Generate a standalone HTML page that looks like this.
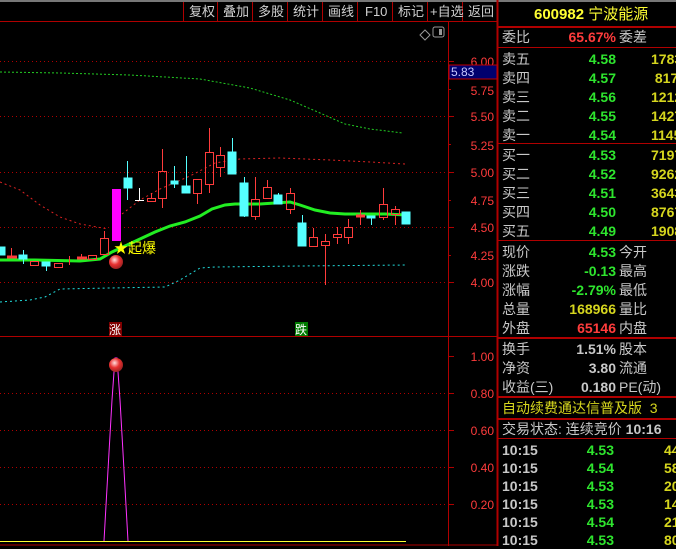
<!DOCTYPE html>
<html><head><meta charset="utf-8"><style>
*{margin:0;padding:0;box-sizing:border-box}
body{width:676px;height:546px;background:#000;overflow:hidden;position:relative;font-family:"Liberation Sans","Noto Sans CJK SC",sans-serif}
.t{position:absolute;white-space:nowrap;font-size:14px;line-height:16px}
.g{color:#c8c8c8}.gr{color:#2ee52e}.y{color:#d6d61e}.r{color:#ff3c3c}.yy{color:#ffff33}
.rt{text-align:right}
.hl{position:absolute;left:498px;width:178px;height:2px;background:#b00000}
</style></head><body>
<svg width="676" height="546" style="position:absolute;left:0;top:0" font-family="Liberation Sans, Noto Sans CJK SC, sans-serif">
<rect x="0" y="0" width="676" height="2" fill="#777"/>
<line x1="0" y1="21.5" x2="498" y2="21.5" stroke="#b00000"/>
<g stroke="#b00000">
<line x1="183.5" y1="2" x2="183.5" y2="21"/><line x1="217.5" y1="2" x2="217.5" y2="21"/><line x1="252.5" y1="2" x2="252.5" y2="21"/><line x1="287.5" y1="2" x2="287.5" y2="21"/><line x1="322.5" y1="2" x2="322.5" y2="21"/><line x1="357.5" y1="2" x2="357.5" y2="21"/><line x1="392.5" y1="2" x2="392.5" y2="21"/><line x1="427.5" y1="2" x2="427.5" y2="21"/><line x1="462.5" y1="2" x2="462.5" y2="21"/>
</g>
<g fill="#d0d0d0" font-size="13">
<text x="189" y="16">复权</text><text x="223" y="16">叠加</text><text x="258" y="16">多股</text><text x="293" y="16">统计</text><text x="328" y="16">画线</text><text x="365" y="16">F10</text><text x="398" y="16">标记</text><text x="430" y="16">+自选</text><text x="468" y="16">返回</text>
</g>
<!-- axes -->
<line x1="448.5" y1="22" x2="448.5" y2="546" stroke="#b00000" stroke-width="1"/>
<line x1="497.5" y1="0" x2="497.5" y2="546" stroke="#b00000" stroke-width="2"/>
<line x1="0" y1="336.5" x2="497" y2="336.5" stroke="#b00000"/>
<line x1="0" y1="545" x2="497" y2="545" stroke="#b00000"/>
<path d="M420 35 l5 -5 l5 5 l-5 5z" fill="none" stroke="#999"/>
<rect x="433" y="27" width="11" height="10" rx="2" fill="none" stroke="#999"/><rect x="439" y="29" width="3" height="6" fill="#999"/>
<g stroke="#b00000" stroke-dasharray="1,3">
<line x1="0" y1="61.5" x2="448" y2="61.5"/><line x1="0" y1="116.5" x2="448" y2="116.5"/><line x1="0" y1="172.5" x2="448" y2="172.5"/><line x1="0" y1="227.5" x2="448" y2="227.5"/><line x1="0" y1="282.5" x2="448" y2="282.5"/>
<line x1="0" y1="393.5" x2="448" y2="393.5"/><line x1="0" y1="430.5" x2="448" y2="430.5"/><line x1="0" y1="467.5" x2="448" y2="467.5"/><line x1="0" y1="504.5" x2="448" y2="504.5"/>
</g>
<g stroke="#b00000">
<line x1="448" y1="61.5" x2="454" y2="61.5"/><line x1="448" y1="89.5" x2="451" y2="89.5"/><line x1="448" y1="116.5" x2="454" y2="116.5"/><line x1="448" y1="144.5" x2="451" y2="144.5"/><line x1="448" y1="172.5" x2="454" y2="172.5"/><line x1="448" y1="200.5" x2="451" y2="200.5"/><line x1="448" y1="227.5" x2="454" y2="227.5"/><line x1="448" y1="255.5" x2="451" y2="255.5"/><line x1="448" y1="282.5" x2="454" y2="282.5"/>
<line x1="448" y1="356.5" x2="454" y2="356.5"/><line x1="448" y1="393.5" x2="454" y2="393.5"/><line x1="448" y1="430.5" x2="454" y2="430.5"/><line x1="448" y1="467.5" x2="454" y2="467.5"/><line x1="448" y1="504.5" x2="454" y2="504.5"/>
</g>
<g fill="#ff3c3c" font-size="12" text-anchor="end">
<text x="494" y="66">6.00</text><text x="494" y="95">5.75</text><text x="494" y="121">5.50</text><text x="494" y="150">5.25</text><text x="494" y="177">5.00</text><text x="494" y="205">4.75</text><text x="494" y="232">4.50</text><text x="494" y="260">4.25</text><text x="494" y="287">4.00</text>
<text x="494" y="361">1.00</text><text x="494" y="398">0.80</text><text x="494" y="435">0.60</text><text x="494" y="472">0.40</text><text x="494" y="509">0.20</text>
</g>
<rect x="449" y="65" width="48" height="14" fill="#00006e" stroke="#c00000"/>
<text x="451" y="76" fill="#c8c8ff" font-size="12">5.83</text>
<!-- MA lines -->
<polyline fill="none" stroke="#22cc22" stroke-dasharray="2,2" points="0,72 60,73 130,75 200,79 250,88 290,100 320,113 345,124 370,129 403,133"/>
<polyline fill="none" stroke="#dd2222" stroke-dasharray="2,3" points="0,182 20,190 40,205 60,217 80,224 108,229"/>
<polyline fill="none" stroke="#dd2222" stroke-dasharray="2,3" points="122,214 140,200 160,189 190,176 215,163 240,159 280,158 330,160 370,162 405,164"/>
<polyline fill="none" stroke="#22dddd" stroke-dasharray="2,3" points="0,302 30,300 45,297 60,289 110,288 165,287 180,280 200,268 215,267 300,266 407,265"/>
<polyline fill="none" stroke="#22ee22" stroke-width="3" points="0,260 35,260 80,261 100,259 112,252 125,246 140,239 155,232 170,226 185,222 200,216 212,209 225,205 235,204 260,204 290,202 300,205 315,210 330,213 345,214 385,214 407,215"/>
<!-- candles -->
<g stroke="#ff3c3c" fill="none">
<line x1="11.5" y1="248" x2="11.5" y2="256"/><rect x="7.5" y="256" width="9" height="2" fill="#ff3c3c"/>
<rect x="30.5" y="261.5" width="8" height="4"/>
<rect x="54.5" y="263.5" width="8" height="4"/><line x1="69.5" y1="256" x2="69.5" y2="265"/>
<rect x="77.5" y="257" width="9" height="2" fill="#ff3c3c"/><line x1="81.5" y1="254" x2="81.5" y2="257"/>
<rect x="88.5" y="255.5" width="8" height="4"/>
<rect x="100.5" y="238.5" width="8" height="16"/><line x1="104.5" y1="231" x2="104.5" y2="238"/>
<rect x="147.5" y="198.5" width="8" height="3"/><line x1="151.5" y1="193" x2="151.5" y2="198"/>
<rect x="158.5" y="171.5" width="8" height="27"/><line x1="162.5" y1="149" x2="162.5" y2="171"/><line x1="162.5" y1="199" x2="162.5" y2="208"/>
<rect x="193.5" y="179.5" width="8" height="14"/><line x1="197.5" y1="194" x2="197.5" y2="204"/>
<rect x="205.5" y="152.5" width="8" height="32"/><line x1="209.5" y1="128" x2="209.5" y2="152"/><line x1="209.5" y1="185" x2="209.5" y2="193"/>
<rect x="216.5" y="155.5" width="8" height="12"/><line x1="220.5" y1="147" x2="220.5" y2="155"/><line x1="220.5" y1="168" x2="220.5" y2="177"/>
<rect x="251.5" y="199.5" width="8" height="17"/><line x1="255.5" y1="177" x2="255.5" y2="199"/><line x1="255.5" y1="217" x2="255.5" y2="220"/>
<rect x="263.5" y="187.5" width="8" height="11"/><line x1="267.5" y1="180" x2="267.5" y2="187"/>
<rect x="286.5" y="193.5" width="8" height="16"/><line x1="290.5" y1="188" x2="290.5" y2="193"/><line x1="290.5" y1="210" x2="290.5" y2="214"/>
<rect x="309.5" y="237.5" width="8" height="9"/><line x1="313.5" y1="228" x2="313.5" y2="237"/>
<rect x="321.5" y="241.5" width="8" height="4"/><line x1="325.5" y1="234" x2="325.5" y2="241"/><line x1="325.5" y1="246" x2="325.5" y2="285"/>
<rect x="333.5" y="234.5" width="8" height="3"/><line x1="337.5" y1="227" x2="337.5" y2="234"/><line x1="337.5" y1="238" x2="337.5" y2="244"/>
<rect x="344.5" y="227.5" width="8" height="10"/><line x1="348.5" y1="219" x2="348.5" y2="227"/><line x1="348.5" y1="238" x2="348.5" y2="244"/>
<line x1="360.5" y1="210" x2="360.5" y2="225"/><rect x="356.5" y="215" width="8" height="2" fill="#ff3c3c"/>
<rect x="379.5" y="204.5" width="8" height="13"/><line x1="383.5" y1="188" x2="383.5" y2="204"/><line x1="383.5" y1="218" x2="383.5" y2="220"/>
<rect x="391.5" y="209.5" width="8" height="5"/><line x1="395.5" y1="206" x2="395.5" y2="209"/><line x1="395.5" y1="215" x2="395.5" y2="225"/>
</g>
<g fill="#55ffff" stroke="#55ffff">
<rect x="0" y="247" width="5" height="8"/>
<rect x="19" y="255" width="8" height="4"/><line x1="23.5" y1="250" x2="23.5" y2="264"/>
<rect x="42" y="262" width="8" height="4"/><line x1="46.5" y1="262" x2="46.5" y2="271"/>
<rect x="124" y="178" width="8" height="10"/><line x1="127.5" y1="161" x2="127.5" y2="200"/>
<rect x="171" y="181" width="7" height="3"/><line x1="174.5" y1="166" x2="174.5" y2="188"/>
<rect x="182" y="186" width="8" height="7"/><line x1="186.5" y1="156" x2="186.5" y2="193"/>
<rect x="228" y="152" width="8" height="22"/><line x1="232.5" y1="138" x2="232.5" y2="152"/>
<rect x="240" y="183" width="8" height="33"/><line x1="244.5" y1="177" x2="244.5" y2="217"/>
<rect x="274" y="195" width="8" height="9"/><line x1="278.5" y1="193" x2="278.5" y2="195"/>
<rect x="298" y="223" width="8" height="23"/><line x1="302.5" y1="215" x2="302.5" y2="223"/>
<rect x="367" y="216" width="8" height="2"/><line x1="371.5" y1="216" x2="371.5" y2="225"/>
<rect x="402" y="212" width="8" height="12"/>
</g>
<line x1="139.5" y1="188" x2="139.5" y2="201" stroke="#fff"/><line x1="135" y1="200.5" x2="144" y2="200.5" stroke="#fff"/>
<rect x="112" y="189" width="9" height="52" fill="#ff00ff"/>
<text x="114" y="253" fill="#ffff00" font-size="14">★起爆</text>
<defs><radialGradient id="b" cx="0.4" cy="0.35" r="0.7"><stop offset="0" stop-color="#ffdede"/><stop offset="0.5" stop-color="#e83030"/><stop offset="1" stop-color="#902020"/></radialGradient></defs>
<circle cx="116" cy="262" r="7" fill="url(#b)"/>
<!-- bottom -->
<polyline fill="none" stroke="#ff33ff" points="104,541 108,470 112,400 115,358 117,358 120,400 124,470 128,541"/>
<circle cx="116" cy="365" r="7" fill="url(#b)"/>
<line x1="0" y1="541.5" x2="406" y2="541.5" stroke="#ffff33"/>
<rect x="109" y="322" width="13" height="14" fill="#800000"/><text x="109" y="334" fill="#fff" font-size="12">涨</text>
<rect x="295" y="322" width="13" height="14" fill="#007a00"/><text x="295" y="334" fill="#fff" font-size="12">跌</text>
</svg>
<div class="hl" style="top:26px"></div>
<div class="hl" style="top:47px;height:1px"></div>
<div class="hl" style="top:143px;height:1px"></div>
<div class="hl" style="top:240px;height:1px"></div>
<div class="hl" style="top:337px"></div>
<div class="hl" style="top:396px"></div>
<div class="hl" style="top:418px"></div>
<div class="hl" style="top:438px;height:1px"></div>
<div class="t yy" style="left:534px;top:7px;font-size:15px;font-weight:bold">600982 <span style="font-weight:normal">宁波能源</span></div>
<div id="p"></div>
<div class="t g" style="left:502px;top:29px">委比</div><div class="t r rt" style="left:540px;width:76px;top:29px;font-weight:bold">65.67%</div><div class="t g" style="left:619px;top:29px">委差</div>
<div class="t g" style="left:502px;top:50px;line-height:19px">卖五<br>卖四<br>卖三<br>卖二<br>卖一</div>
<div class="t gr rt" style="left:560px;width:56px;top:50px;line-height:19px;font-weight:bold">4.58<br>4.57<br>4.56<br>4.55<br>4.54</div>
<div class="t y" style="left:651px;top:50px;line-height:19px;font-weight:bold">1783<br>&nbsp;817<br>1212<br>1427<br>1145</div>
<div class="t g" style="left:502px;top:146px;line-height:19px">买一<br>买二<br>买三<br>买四<br>买五</div>
<div class="t gr rt" style="left:560px;width:56px;top:146px;line-height:19px;font-weight:bold">4.53<br>4.52<br>4.51<br>4.50<br>4.49</div>
<div class="t y" style="left:651px;top:146px;line-height:19px;font-weight:bold">7197<br>9262<br>3643<br>8767<br>1908</div>
<div class="t g" style="left:502px;top:243px;line-height:19px">现价<br>涨跌<br>涨幅<br>总量<br>外盘</div>
<div class="t rt" style="left:540px;width:76px;top:243px;line-height:19px;font-weight:bold"><span class="gr">4.53</span><br><span class="gr">-0.13</span><br><span class="gr">-2.79%</span><br><span class="y">168966</span><br><span class="r">65146</span></div>
<div class="t g" style="left:619px;top:243px;line-height:19px">今开<br>最高<br>最低<br>量比<br>内盘</div>
<div class="t g" style="left:502px;top:340px;line-height:19px">换手<br>净资<br>收益(三)</div>
<div class="t g rt" style="left:540px;width:76px;top:340px;line-height:19px;font-weight:bold">1.51%<br>3.80<br>0.180</div>
<div class="t g" style="left:619px;top:340px;line-height:19px">股本<br>流通<br>PE(动)</div>
<div class="t y" style="left:502px;top:400px">自动续费通达信普及版&nbsp; 3</div>
<div class="t g" style="left:502px;top:421px">交易状态: 连续竞价 <b>10:16</b></div>
<div class="t g" style="left:502px;top:441px;line-height:18px;font-weight:bold">10:15<br>10:15<br>10:15<br>10:15<br>10:15<br>10:15</div>
<div class="t gr rt" style="left:560px;width:54px;top:441px;line-height:18px;font-weight:bold">4.53<br>4.54<br>4.53<br>4.53<br>4.54<br>4.53</div>
<div class="t y" style="left:664px;top:441px;line-height:18px;font-weight:bold">44<br>58<br>20<br>14<br>21<br>80</div>
</body></html>
